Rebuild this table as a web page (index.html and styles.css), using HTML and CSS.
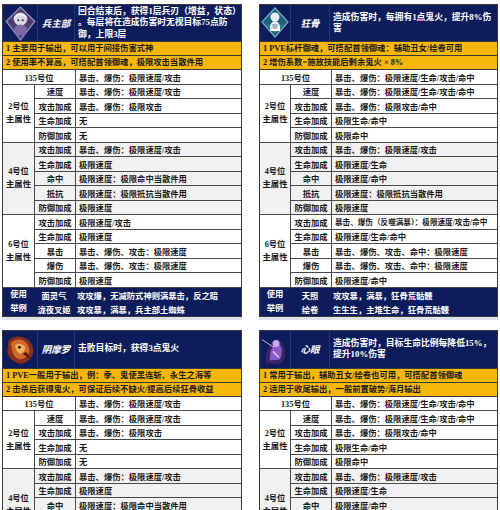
FILE: index.html
```html
<!DOCTYPE html>
<html lang="zh">
<head>
<meta charset="utf-8">
<link rel="stylesheet" href="styles.css">
</head>
<body>
<div class="page">

  <!-- 兵主部 -->
  <div class="card c-left">
    <div class="hd">
      <div class="ic">
        <svg width="33" height="35" viewBox="0 0 30 32"><path d="M15 1 L28 14 L15 31 L2 14 Z" fill="#4b3d6e" stroke="#9c8fc2" stroke-width="1.2"/><circle cx="15" cy="12" r="6" fill="#d9d6e6"/><path d="M8 13 Q15 4 22 13 L20 9 Q15 5 10 9 Z" fill="#f2f0f8"/><path d="M9 20 Q15 14 21 20 L19 27 L11 27 Z" fill="#7f6aa8"/><circle cx="13" cy="13" r="1" fill="#3a2d55"/><circle cx="17" cy="13" r="1" fill="#3a2d55"/></svg>
      </div>
      <div class="nm">兵主部</div>
      <div class="ds">回合结束后，获得1层兵刃（增益，状态）<br>。每层将在造成伤害时无视目标75点防<br>御，上限3层</div>
    </div>
    <div class="tip">1 主要用于输出，可以用于间接伤害式神</div>
    <div class="tip">2 使用率不算高，可搭配首领御魂，极限攻击当散件用</div>
    <div class="tbl">
      <div class="c span2">135号位</div><div class="c v">暴击、爆伤：极限速度/攻击</div>
      <div class="c grp r4">2号位<br>主属性</div>
      <div class="c k">速度</div><div class="c v">暴击、爆伤：极限速度/攻击</div>
      <div class="c k">攻击加成</div><div class="c v">暴击、爆伤：极限攻击</div>
      <div class="c k">生命加成</div><div class="c v">无</div>
      <div class="c k">防御加成</div><div class="c v">无</div>
      <div class="c grp r5 g">4号位<br>主属性</div>
      <div class="c k g">攻击加成</div><div class="c v g">暴击、爆伤：极限速度/攻击</div>
      <div class="c k g">生命加成</div><div class="c v g">极限速度</div>
      <div class="c k g">命中</div><div class="c v g">极限速度：极限命中当散件用</div>
      <div class="c k g">抵抗</div><div class="c v g">极限速度：极限抵抗当散件用</div>
      <div class="c k g">防御加成</div><div class="c v g">极限速度</div>
      <div class="c grp r5">6号位<br>主属性</div>
      <div class="c k">攻击加成</div><div class="c v">极限速度/攻击</div>
      <div class="c k">生命加成</div><div class="c v">极限速度</div>
      <div class="c k">暴击</div><div class="c v">暴击、爆伤、攻击：极限速度</div>
      <div class="c k">爆伤</div><div class="c v">暴击、爆伤、攻击：极限速度</div>
      <div class="c k">防御加成</div><div class="c v">极限速度</div>
    </div>
    <div class="ft">
      <div class="f grp2">使用<br>举例</div>
      <div class="f k">面灵气</div><div class="f v">攻攻爆，无减防式神则满暴击，反之暗</div>
      <div class="f k">泷夜叉姬</div><div class="f v">攻攻暴，满暴，兵主部土蜘蛛</div>
    </div>
  </div>

  <!-- 狂骨 -->
  <div class="card c-right">
    <div class="hd">
      <div class="ic">
        <svg width="30" height="34" viewBox="0 0 30 32"><path d="M15 1 L28 15 L15 30 L2 15 Z" fill="#1f5f78" stroke="#6fb4c8" stroke-width="1.2"/><path d="M6 17 L15 26 L24 17 L15 21 Z" fill="#3f8fa6"/><circle cx="15" cy="10" r="4.5" fill="#e8eef2"/><path d="M10 24 Q9 15 15 14 Q21 15 20 24 Z" fill="#f3f6f8"/><path d="M12 17 L18 17 L17 22 L13 22 Z" fill="#9fb6c2"/></svg>
      </div>
      <div class="nm">狂骨</div>
      <div class="ds">造成伤害时，每拥有1点鬼火，提升8%伤<br>害</div>
    </div>
    <div class="tip">1 PVE标杆御魂，可搭配首领御魂：辅助丑女/绘卷可用</div>
    <div class="tip">2 增伤系数=施放技能后剩余鬼火 × 8%</div>
    <div class="tbl">
      <div class="c span2">135号位</div><div class="c v">暴击、爆伤：极限速度/生命/攻击/命中</div>
      <div class="c grp r4">2号位<br>主属性</div>
      <div class="c k">速度</div><div class="c v">暴击、爆伤：极限速度/生命/攻击/命中</div>
      <div class="c k">攻击加成</div><div class="c v">暴击、爆伤：极限攻击/命中</div>
      <div class="c k">生命加成</div><div class="c v">极限生命/命中</div>
      <div class="c k">防御加成</div><div class="c v">极限命中</div>
      <div class="c grp r5 g">4号位<br>主属性</div>
      <div class="c k g">攻击加成</div><div class="c v g">暴击、爆伤：极限速度/攻击</div>
      <div class="c k g">生命加成</div><div class="c v g">极限速度/生命</div>
      <div class="c k g">命中</div><div class="c v g">极限速度/命中</div>
      <div class="c k g">抵抗</div><div class="c v g">极限速度：极限抵抗当散件用</div>
      <div class="c k g">防御加成</div><div class="c v g">极限速度</div>
      <div class="c grp r5">6号位<br>主属性</div>
      <div class="c k">攻击加成</div><div class="c v sm">暴击、爆伤（反噬满暴）：极限速度/攻击/命中</div>
      <div class="c k">生命加成</div><div class="c v">极限速度/生命/命中</div>
      <div class="c k">暴击</div><div class="c v">暴击、爆伤、攻击、命中：极限速度</div>
      <div class="c k">爆伤</div><div class="c v">暴击、爆伤、攻击、命中：极限速度</div>
      <div class="c k">防御加成</div><div class="c v">极限速度/命中</div>
    </div>
    <div class="ft">
      <div class="f grp2">使用<br>举例</div>
      <div class="f k">天照</div><div class="f v">攻攻暴，满暴，狂骨荒骷髅</div>
      <div class="f k">绘卷</div><div class="f v">生生生，主堆生命，狂骨荒骷髅</div>
    </div>
  </div>

  <!-- 阴摩罗 -->
  <div class="card c-left">
    <div class="hd tall">
      <div class="ic">
        <svg width="33" height="35" viewBox="0 0 30 32"><path d="M4 8 Q10 2 18 5 Q26 8 27 17 Q26 27 16 29 Q6 28 3 19 Z" fill="#8a2e1c"/><path d="M6 10 Q12 5 18 8 Q24 12 23 19 Q20 25 14 25 Q8 23 7 16 Z" fill="#d06a2c"/><path d="M10 12 Q15 9 19 13 Q20 18 15 20 Q11 19 10 12 Z" fill="#f0b060"/><circle cx="14" cy="14" r="1.3" fill="#3a1208"/><path d="M17 20 L26 26 L20 18 Z" fill="#5a1c10"/></svg>
      </div>
      <div class="nm">阴摩罗</div>
      <div class="ds">击败目标时，获得3点鬼火</div>
    </div>
    <div class="tip">1 PVE一般用于输出，例：季、鬼使黑连斩、永生之海等</div>
    <div class="tip">2 击杀后获得鬼火，可保证后续不缺火/提高后续狂骨收益</div>
    <div class="tbl">
      <div class="c span2">135号位</div><div class="c v">暴击、爆伤：极限速度/攻击</div>
      <div class="c grp r4">2号位<br>主属性</div>
      <div class="c k">速度</div><div class="c v">暴击、爆伤：极限速度/攻击</div>
      <div class="c k">攻击加成</div><div class="c v">暴击、爆伤：极限攻击</div>
      <div class="c k">生命加成</div><div class="c v">无</div>
      <div class="c k">防御加成</div><div class="c v">无</div>
      <div class="c grp r5 g">4号位<br>主属性</div>
      <div class="c k g">攻击加成</div><div class="c v g">暴击、爆伤：极限速度/攻击</div>
      <div class="c k g">生命加成</div><div class="c v g">极限速度</div>
      <div class="c k g">命中</div><div class="c v g">极限速度：极限命中当散件用</div>
      <div class="c k g">抵抗</div><div class="c v g">极限速度：极限抵抗当散件用</div>
      <div class="c k g">防御加成</div><div class="c v g">极限速度</div>
    </div>
  </div>

  <!-- 心眼 -->
  <div class="card c-right">
    <div class="hd tall">
      <div class="ic">
        <svg width="30" height="35" viewBox="0 0 30 32"><path d="M6 30 Q4 18 11 10 Q15 4 20 7 Q26 12 25 22 Q24 29 18 31 Z" fill="#3b2466"/><path d="M10 27 Q9 18 14 12 Q18 9 21 13 Q23 19 20 26 Z" fill="#8a5cc8"/><circle cx="16" cy="10" r="3.5" fill="#c9a6ef"/><path d="M2 6 L14 14" stroke="#b9b2d8" stroke-width="1"/><path d="M13 18 L19 24" stroke="#e7d8ff" stroke-width="1.2"/></svg>
      </div>
      <div class="nm">心眼</div>
      <div class="ds">造成伤害时，目标生命比例每降低15%，<br>提升10%伤害</div>
    </div>
    <div class="tip">1 常用于输出，辅助丑女/绘卷也可用，可搭配首领御魂</div>
    <div class="tip">2 适用于收尾输出，一般前置破势/海月输出</div>
    <div class="tbl">
      <div class="c span2">135号位</div><div class="c v">暴击、爆伤：极限速度/生命/攻击/命中</div>
      <div class="c grp r4">2号位<br>主属性</div>
      <div class="c k">速度</div><div class="c v">暴击、爆伤：极限速度/生命/攻击/命中</div>
      <div class="c k">攻击加成</div><div class="c v">暴击、爆伤：极限攻击/命中</div>
      <div class="c k">生命加成</div><div class="c v">极限生命/命中</div>
      <div class="c k">防御加成</div><div class="c v">极限命中</div>
      <div class="c grp r5 g">4号位<br>主属性</div>
      <div class="c k g">攻击加成</div><div class="c v g">暴击、爆伤：极限速度/攻击</div>
      <div class="c k g">生命加成</div><div class="c v g">极限速度/生命</div>
      <div class="c k g">命中</div><div class="c v g">极限速度/命中</div>
      <div class="c k g">抵抗</div><div class="c v g">极限速度：极限抵抗当散件用</div>
      <div class="c k g">防御加成</div><div class="c v g">极限速度</div>
    </div>
  </div>

</div>
</body>
</html>
```
FILE: styles.css
```css
* { box-sizing: border-box; }
html, body { margin: 0; padding: 0; background: #fff; }
body {
  font-family: "Liberation Serif", "Noto Sans CJK SC", serif;
  font-weight: bold;
  font-size: 8.3px;
  color: #1a1a1a;
}
.page {
  display: grid;
  grid-template-columns: 240px 239px;
  column-gap: 17px;
  row-gap: 13px;
  padding: 4px 0 0 2px;
  align-items: start;
}
.card {
  border: 1px solid #3a3a3a;
  box-shadow: 0 3px 0 #dde2ea;
}
.hd {
  display: grid;
  height: 37px;
  background: #0d1d5c;
  color: #fff;
  border-bottom: 1px solid #3a3a3a;
}
.hd.tall { height: 38px; }
.c-left .hd { grid-template-columns: 35px 37px 1fr; }
.c-right .hd { grid-template-columns: 31px 39px 1fr; }
.ic {
  display: flex;
  align-items: center;
  justify-content: center;
  border-right: 1px solid #26367a;
  overflow: hidden;
}
.nm {
  display: flex;
  align-items: center;
  justify-content: center;
  font-style: italic;
  font-size: 9.5px;
  border-right: 1px solid #26367a;
}
.ds {
  display: flex;
  align-items: center;
  padding-left: 3px;
  font-size: 8.8px;
  line-height: 11.5px;
}
.tip {
  height: 14px;
  line-height: 13px;
  background: #f6b70a;
  padding-left: 3px;
  border-bottom: 1px solid #3a3a3a;
  color: #1b1b1b;
  white-space: nowrap;
  overflow: hidden;
}
.tbl {
  display: grid;
  grid-auto-rows: 13.5px;
  gap: 1px;
  background: #4a4a4a;
}
.c-left .tbl, .c-left .ft { grid-template-columns: 31px 40px 1fr; }
.c-right .tbl, .c-right .ft { grid-template-columns: 30px 40px 1fr; }
.c {
  background: #fff;
  display: flex;
  align-items: center;
  white-space: nowrap;
  overflow: hidden;
}
.c.g { background: #f1f1f1; }
.span2 { grid-column: span 2; justify-content: center; }
.grp { justify-content: center; text-align: center; line-height: 13px; }
.r4 { grid-row: span 4; }
.r5 { grid-row: span 5; }
.k { justify-content: center; }
.v { padding-left: 3px; }
.sm { font-size: 7.6px; }
.ft {
  display: grid;
  grid-auto-rows: 14px;
  background: #0d1d5c;
  color: #fff;
  border-top: 1px solid #4a4a4a;
}
.f {
  display: flex;
  align-items: center;
  white-space: nowrap;
}
.grp2 {
  grid-row: span 2;
  justify-content: center;
  text-align: center;
  line-height: 14px;
}
.f.k { justify-content: center; }
.f.v { padding-left: 3px; }
```
